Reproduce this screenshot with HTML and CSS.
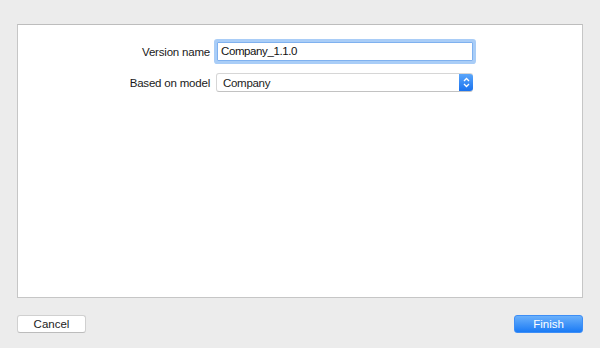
FILE: index.html
```html
<!DOCTYPE html>
<html>
<head>
	<title>New Version</title>
	<link rel="stylesheet" href="styles.css">
</head>
<body>
	<div class="sheet">
		<div class="panel">
			<div class="form">
				<label class="label">Version name</label>
				<div class="field focused">Company_1.1.0</div>
				<label class="label">Based on model</label>
				<div class="popup">
					<span>Company</span>
					<span class="stepper">
						<svg width="9" height="13" viewBox="0 0 9 13">
							<path d="M2 5 L4.5 2.5 L7 5 M2 8 L4.5 10.5 L7 8" fill="none" stroke="#fff" stroke-width="1.3"/>
						</svg>
					</span>
				</div>
			</div>
		</div>
		<div class="buttons">
			<button class="btn">Cancel</button>
			<button class="btn primary">Finish</button>
		</div>
	</div>
</body>
</html>
```
FILE: styles.css
```css
body {
	margin: 0;
	background: #ececec;
	font-family: "Liberation Sans", Arial, sans-serif;
	font-size: 12px;
	color: #222;
}
.sheet {
	padding: 24px 17px 0;
}
.panel {
	height: 272px;
	background: #fff;
	border: 1px solid #c6c6c6;
	border-top-color: #bdbdbd;
}
.form {
	display: grid;
	grid-template-columns: 192px 256px;
	column-gap: 6px;
	row-gap: 12px;
	align-items: center;
	padding-top: 17px;
}
.label {
	text-align: right;
	color: #1a1a1a;
	font-size: 11.5px;
	letter-spacing: -0.2px;
}
.field {
	height: 17px;
	line-height: 17px;
	padding: 0 3px;
	background: #fff;
	border: 1px solid #b5b5b5;
	font-size: 11.5px;
	letter-spacing: -0.4px;
	color: #111;
}
.field.focused {
	border-color: #7fb1ef;
	box-shadow: 0 0 0 3px #a9cdf7;
	border-radius: 1px;
	margin-left: 1px;
	width: 248px;
}
.popup {
	display: flex;
	justify-content: space-between;
	align-items: center;
	height: 17px;
	padding-left: 6px;
	background: #fff;
	border: 1px solid #d6d6d6;
	border-bottom-color: #c2c2c2;
	border-radius: 3px;
	font-size: 11.5px;
	letter-spacing: -0.3px;
	width: 249px;
}
.stepper {
	display: flex;
	align-items: center;
	justify-content: center;
	width: 14px;
	height: 17px;
	margin-right: -1px;
	border-radius: 0 3px 3px 0;
	background: linear-gradient(#5aa6fb, #1a72ee);
}
.buttons {
	display: flex;
	justify-content: space-between;
	margin-top: 17px;
}
.btn {
	width: 69px;
	height: 18px;
	padding: 0;
	font-family: inherit;
	font-size: 11.5px;
	color: #222;
	background: #fff;
	border: 1px solid #d0d0d0;
	border-bottom-color: #bcbcbc;
	border-radius: 3px;
}
.btn.primary {
	color: #fff;
	border-color: #3d8ef6;
	background: linear-gradient(#6ab0fb, #1b7bf5);
}
```
